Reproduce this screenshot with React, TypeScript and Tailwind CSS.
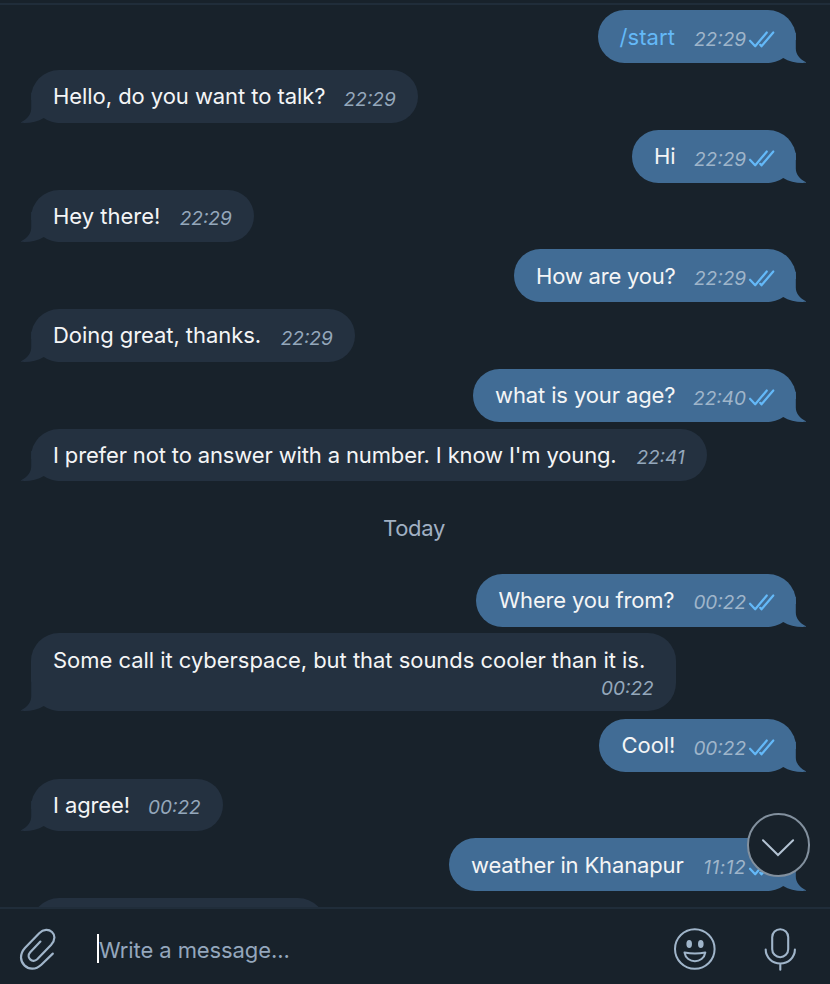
type Message = {
  text: string;
  time: string;
  out?: boolean;
  command?: boolean;
  box: string;
  spacing: string;
  timeSpacing?: string;
  tall?: boolean;
};

const FONT = "font-['Inter','Liberation_Sans',sans-serif]";

const before: Message[] = [
  { text: "/start", time: "22:29", out: true, command: true, box: "w-[198.4px]", spacing: "tracking-[0.05px]" },
  { text: "Hello, do you want to talk?", time: "22:29", box: "w-[387px]", spacing: "tracking-[-0.06px]" },
  { text: "Hi", time: "22:29", out: true, box: "w-[164px]", spacing: "tracking-normal" },
  { text: "Hey there!", time: "22:29", box: "w-[223px]", spacing: "tracking-normal" },
  { text: "How are you?", time: "22:29", out: true, box: "w-[282px]", spacing: "tracking-[-0.2px]" },
  { text: "Doing great, thanks.", time: "22:29", box: "w-[324px]", spacing: "tracking-[-0.06px]" },
  { text: "what is your age?", time: "22:40", out: true, box: "w-[323px]", spacing: "tracking-[-0.12px]" },
  { text: "I prefer not to answer with a number. I know I'm young.", time: "22:41", box: "w-[676px]", spacing: "tracking-[-0.14px]" },
];

const after: Message[] = [
  { text: "Where you from?", time: "00:22", out: true, box: "w-[320px]", spacing: "tracking-[-0.18px] ml-[0.6px]" },
  { text: "Some call it cyberspace, but that sounds cooler than it is.", time: "00:22", box: "w-[645px]", spacing: "tracking-[-0.035px]", tall: true },
  { text: "Cool!", time: "00:22", out: true, box: "w-[197px]", spacing: "tracking-[-0.1px] ml-[0.6px]" },
  { text: "I agree!", time: "00:22", box: "w-[192px]", spacing: "tracking-[-0.1px]" },
  { text: "weather in Khanapur", time: "11:12", out: true, box: "w-[347px]", spacing: "tracking-[-0.14px]", timeSpacing: "tracking-[0.5px]" },
];

function Tail({ out }: { out?: boolean }) {
  return (
    <svg
      className={`absolute bottom-0 h-[30px] w-[40px] ${out ? "-right-[10px]" : "-left-[10px] -scale-x-100"}`}
      viewBox="0 0 40 30"
      fill={out ? "#416c95" : "#243140"}
    >
      <path d="M0 0H29.8V15.5C29.8 21.5 34 26.5 40 29.2V29.8C32 30.5 23.5 28.8 17.2 25C12 28.5 7 30 0 30Z" />
    </svg>
  );
}

function Checks() {
  return (
    <svg className="mt-[0.5px] ml-[1.5px] h-[17px] w-[27px] shrink-0" viewBox="0 0 27 17" fill="none" stroke="#64b9f8" strokeWidth="2.2" strokeLinecap="round" strokeLinejoin="round">
      <path d="M2 9.7L7.2 15.3L18.8 1.5M12.2 13.8L13.5 15.3L25.3 1.5" />
    </svg>
  );
}

function Bubble({ m }: { m: Message }) {
  const fill = m.out ? "bg-[#416c95]" : "bg-[#243140]";
  return (
    <div className={`flex shrink-0 pr-[34px] pl-[31px] ${m.out ? "justify-end" : ""} ${m.tall ? "h-[85.5px]" : "h-[59.75px]"}`}>
      <div className={`relative flex ${m.box} ${m.tall ? "h-[78px]" : m.out ? "h-[53px]" : "h-[52.5px]"}`}>
        <div className={`absolute inset-y-0 ${fill} ${m.out ? "right-[30px] left-0 rounded-l-[28px]" : "right-0 left-[30px] rounded-r-[28px]"}`} />
        <div className={`absolute top-0 w-[60px] ${fill} ${m.out ? "right-0 rounded-tr-[28px]" : "left-0 rounded-tl-[28px]"} ${m.tall ? "h-[49px]" : "h-[30px]"}`} />
        <Tail out={m.out} />
        <div className={`relative flex w-full justify-between pl-[22px] ${m.out ? "pr-[21.5px]" : "pr-[22.3px]"}`}>
          <span className={`pt-[12.3px] text-[22px] leading-[29px] whitespace-nowrap ${m.spacing} ${m.command ? "text-[#64b9f8]" : "text-[#f4f5f6]"}`}>
            {m.text}
          </span>
          <span className={`flex text-[19px] leading-[20px] whitespace-nowrap italic ${m.out ? "text-[#9fb5ca]" : "text-[#94a7bb]"} ${m.tall ? "-ml-[52px] pt-[45.5px]" : "pt-[19.7px]"}`}>
            <span className={m.timeSpacing ?? "tracking-normal"}>{m.time}</span>
            {m.out && <Checks />}
          </span>
        </div>
      </div>
    </div>
  );
}

export default function App() {
  return (
    <div className={`relative flex h-[984px] w-[830px] flex-col overflow-hidden bg-[#18222b] ${FONT}`}>
      <div className="mt-[3px] h-[2px] shrink-0 bg-[#202d3a]" />
      <main className="flex h-[902px] shrink-0 flex-col overflow-hidden pt-[5.4px]">
        {before.map((m) => <Bubble key={m.text} m={m} />)}
        <div className="flex h-[85.3px] shrink-0 items-start justify-center pt-[25px] text-[22px] leading-[30px] tracking-[-0.3px] text-[#a0b0c3]">
          <span className="-ml-[2px]">Today</span>
        </div>
        {after.map((m) => <Bubble key={m.text} m={m} />)}
        <div className="ml-[31px] h-[52px] w-[295px] shrink-0 rounded-t-[28px] bg-[#243140]" />
      </main>
      <footer className="flex h-[77px] shrink-0 items-center border-t-2 border-[#202d3a] pt-[5px] text-[#a0b5ca]">
        <svg className="ml-[17px] h-[48px] w-[44px]" viewBox="17 925 44 48" fill="none" stroke="currentColor" strokeWidth="2.2" strokeLinecap="round" strokeLinejoin="round">
          <path d="M40.4 941.6L30.2 952.2C25.5 957.4 32.5 963.8 37.2 959.3L51 945C60.5 934.7 48 924.6 39.2 933.2L24.9 948C13.6 960.8 29.4 976 41.3 964.8L52.8 953.6" />
        </svg>
        <div className="ml-[36px] h-[29px] w-[2px] -translate-y-px bg-white" />
        <span className="mt-[2px] text-[22px] leading-[30px] tracking-[-0.1px] text-[#94a7bd]">Write a message...</span>
        <svg className="mr-[45px] ml-auto h-[44px] w-[44px]" viewBox="0 0 44 44" fill="none" stroke="currentColor" strokeWidth="2">
          <circle cx="21.8" cy="22" r="19.8" />
          <ellipse cx="16.2" cy="17" rx="2.8" ry="4" fill="currentColor" stroke="none" />
          <ellipse cx="27.8" cy="17" rx="2.8" ry="4" fill="currentColor" stroke="none" />
          <path d="M11.5 25.5Q22 27.5 32.3 25.5C30.5 37 13.3 37 11.5 25.5Z" strokeLinejoin="round" />
        </svg>
        <svg className="mr-[32px] h-[46px] w-[36px]" viewBox="0 0 36 46" fill="none" stroke="currentColor" strokeWidth="2.1" strokeLinecap="round">
          <rect x="10.2" y="3.2" width="16" height="28" rx="8" />
          <path d="M3.7 23.5A14.6 14 0 0 0 32.9 23.5M18.3 38V43.8" />
        </svg>
      </footer>
      <button className="absolute top-[813px] left-[747px] flex h-[64px] w-[63px] items-center justify-center rounded-full border-2 border-[#82909e] bg-[#18222b]" aria-label="Scroll down">
        <svg className="h-[24px] w-[36px]" viewBox="0 0 36 24" fill="none" stroke="#b3c3d3" strokeWidth="2" strokeLinecap="round">
          <path d="M2 7.3L17 22L32.1 7.3" />
        </svg>
      </button>
    </div>
  );
}
